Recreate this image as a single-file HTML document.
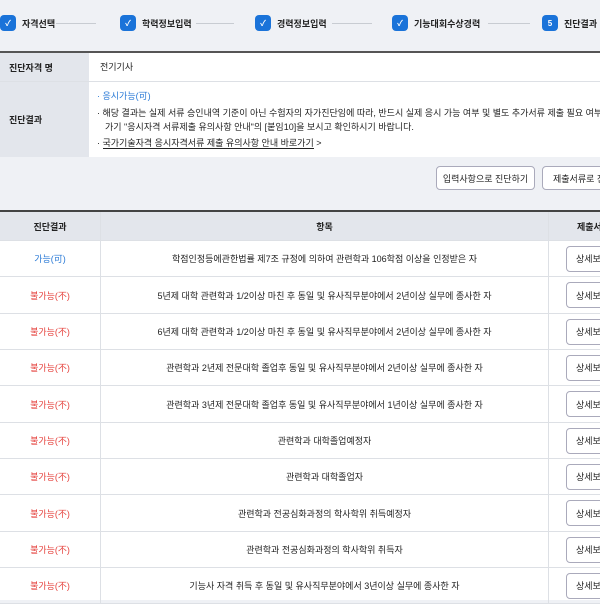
<!DOCTYPE html>
<html><head><meta charset="utf-8"><style>
*{margin:0;padding:0;box-sizing:border-box}
body{width:600px;height:600px;overflow:hidden;background:#eff1f5;font-family:"Liberation Sans","Noto Sans CJK KR",sans-serif;font-size:9px;color:#222;position:relative;white-space:nowrap}
.step{position:absolute;top:15px;height:16px;display:flex;align-items:center;font-weight:bold;font-size:9px;color:#222}
.ck{width:16px;height:16px;border-radius:4px;background:#1a73d9;color:#fff;display:inline-flex;align-items:center;justify-content:center;margin-right:6px;font-size:8px;flex:none}
.ln{position:absolute;top:23px;height:1px;background:#c8ccd2}
.a{position:absolute}
.info{position:absolute;left:0;top:51px;width:600px;border-top:2px solid #555;background:#fff}
.lab{background:#e3e6ec;font-weight:bold;position:absolute;left:0;width:89px;padding-left:9px;display:flex;align-items:center}
.btn{position:absolute;top:166px;height:24px;border:1px solid #aab;border-radius:4px;background:#fff;display:flex;align-items:center;justify-content:center;font-size:9px}
.tbl{position:absolute;left:0;top:210px;width:600px;border-top:2px solid #444;background:#fff}
.row{position:absolute;left:0;width:600px;border-bottom:1px solid #dde0e5;display:flex;align-items:center}
.c1{width:101px;flex:none;text-align:center;border-right:1px solid #dde0e5;height:100%;display:flex;align-items:center;justify-content:center}
.c2{width:448px;flex:none;text-align:center;border-right:1px solid #dde0e5;height:100%;display:flex;align-items:center;justify-content:center}
.c3{flex:1;height:100%;position:relative}
.db{position:absolute;left:17px;top:50%;margin-top:-13px;width:50px;height:26px;border:1px solid #aab;border-radius:4px;background:#fff;display:flex;align-items:center;padding-left:9px}
.ok{color:#2a7ad6}.no{color:#e5413c}
</style></head><body>
<div class="step" style="left:0"><span class="ck">✓</span>자격선택</div>
<div class="ln" style="left:56px;width:40px"></div>
<div class="step" style="left:120px"><span class="ck">✓</span>학력정보입력</div>
<div class="ln" style="left:196px;width:38px"></div>
<div class="step" style="left:255px"><span class="ck">✓</span>경력정보입력</div>
<div class="ln" style="left:332px;width:40px"></div>
<div class="step" style="left:392px"><span class="ck">✓</span>기능대회수상경력</div>
<div class="ln" style="left:488px;width:42px"></div>
<div class="step" style="left:542px"><span class="ck">5</span>진단결과<span style="display:inline-block;width:6px;height:10px;background:#e5413c;border-radius:3px;margin-left:3px"></span></div>

<div class="info" style="height:106px">
<div class="lab" style="top:0;height:28px">진단자격 명</div>
<div class="a" style="left:100px;top:0;height:28px;line-height:28px">전기기사</div>
<div class="a" style="left:0;top:28px;width:600px;height:1px;background:#dde0e5"></div>
<div class="lab" style="top:29px;height:75px">진단결과</div>
<div class="a ok" style="left:97px;top:36px">· 응시가능(可)</div>
<div class="a" style="left:97px;top:53px">· 해당 결과는 실제 서류 승인내역 기준이 아닌 수험자의 자가진단임에 따라, 반드시 실제 응시 가능 여부 및 별도 추가서류 제출 필요 여부를 아래</div>
<div class="a" style="left:105px;top:67px">가기 "응시자격 서류제출 유의사항 안내"의 [붙임10]을 보시고 확인하시기 바랍니다.</div>
<div class="a" style="left:97px;top:83px">· <span style="border-bottom:1px solid #222">국가기술자격 응시자격서류 제출 유의사항 안내 바로가기</span> &gt;</div>
</div>

<div class="btn" style="left:436px;width:99px">입력사항으로 진단하기</div>
<div class="btn" style="left:542px;width:70px;justify-content:flex-start;padding-left:10px">제출서류로 진</div>

<div class="tbl" style="height:390px">
<div class="row" style="top:0;height:29px;background:#e3e6ec;font-weight:bold"><div class="c1">진단결과</div><div class="c2">항목</div><div class="c3" style="display:flex;align-items:center;padding-left:28px">제출서</div></div>
<div class="row" style="top:29px;height:36px"><div class="c1 ok">가능(可)</div><div class="c2">학점인정등에관한법률 제7조 규정에 의하여 관련학과 106학점 이상을 인정받은 자</div><div class="c3"><div class="db">상세보</div></div></div>
<div class="row" style="top:65px;height:37px"><div class="c1 no">불가능(不)</div><div class="c2">5년제 대학 관련학과 1/2이상 마친 후 동일 및 유사직무분야에서 2년이상 실무에 종사한 자</div><div class="c3"><div class="db">상세보</div></div></div>
<div class="row" style="top:102px;height:36px"><div class="c1 no">불가능(不)</div><div class="c2">6년제 대학 관련학과 1/2이상 마친 후 동일 및 유사직무분야에서 2년이상 실무에 종사한 자</div><div class="c3"><div class="db">상세보</div></div></div>
<div class="row" style="top:138px;height:36px"><div class="c1 no">불가능(不)</div><div class="c2">관련학과 2년제 전문대학 졸업후 동일 및 유사직무분야에서 2년이상 실무에 종사한 자</div><div class="c3"><div class="db">상세보</div></div></div>
<div class="row" style="top:174px;height:37px"><div class="c1 no">불가능(不)</div><div class="c2">관련학과 3년제 전문대학 졸업후 동일 및 유사직무분야에서 1년이상 실무에 종사한 자</div><div class="c3"><div class="db">상세보</div></div></div>
<div class="row" style="top:211px;height:36px"><div class="c1 no">불가능(不)</div><div class="c2">관련학과 대학졸업예정자</div><div class="c3"><div class="db">상세보</div></div></div>
<div class="row" style="top:247px;height:36px"><div class="c1 no">불가능(不)</div><div class="c2">관련학과 대학졸업자</div><div class="c3"><div class="db">상세보</div></div></div>
<div class="row" style="top:283px;height:37px"><div class="c1 no">불가능(不)</div><div class="c2">관련학과 전공심화과정의 학사학위 취득예정자</div><div class="c3"><div class="db">상세보</div></div></div>
<div class="row" style="top:320px;height:36px"><div class="c1 no">불가능(不)</div><div class="c2">관련학과 전공심화과정의 학사학위 취득자</div><div class="c3"><div class="db">상세보</div></div></div>
<div class="row" style="top:356px;height:36px"><div class="c1 no">불가능(不)</div><div class="c2">기능사 자격 취득 후 동일 및 유사직무분야에서 3년이상 실무에 종사한 자</div><div class="c3"><div class="db">상세보</div></div></div>
</div>
</body></html>
